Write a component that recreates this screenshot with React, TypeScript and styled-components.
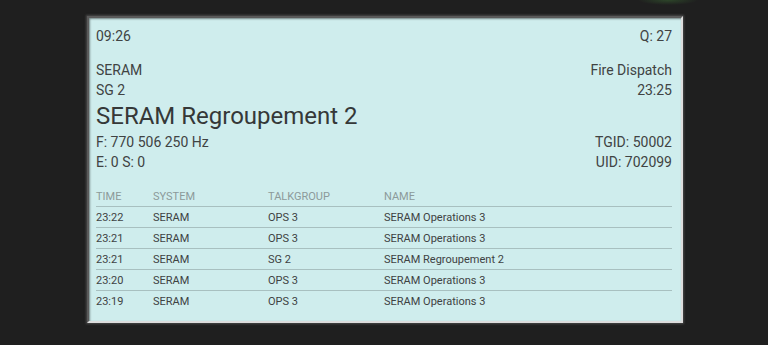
import React from 'react';
import styled, { createGlobalStyle } from 'styled-components';

const GlobalStyle = createGlobalStyle`
  html, body {
    margin: 0;
    padding: 0;
    height: 100%;
  }
  body {
    background:
      radial-gradient(ellipse 30px 5px at 668px 0, rgba(70, 140, 60, 0.35), rgba(70, 140, 60, 0) 100%),
      #1f1f1f;
    font-family: Roboto, "Liberation Sans", sans-serif;
  }
`;

const Page = styled.div`
  padding: 16px 0 0 87px;
`;

const Panel = styled.div`
  box-sizing: border-box;
  width: 596px;
  height: 307px;
  background: #cfeded;
  border: 2px solid;
  border-color: #5a5a5a #dcdcdc #dcdcdc #5a5a5a;
  box-shadow: 0 0 2px 1px #4a4a4a, inset 1px 1px 2px rgba(0, 0, 0, 0.45);
  padding: 8px 9px 0 7px;
  color: #404343;
`;

const InfoRow = styled.div<{ $gap?: number }>`
  display: flex;
  justify-content: space-between;
  align-items: center;
  margin-top: ${({ $gap }) => $gap ?? 0}px;
  height: 20px;
  font-size: 14px;
`;

const Title = styled.div`
  font-size: 24px;
  line-height: 32px;
  height: 32px;
  color: #353838;
`;

const Table = styled.table`
  width: 100%;
  margin-top: 14px;
  border-collapse: collapse;
  font-size: 11px;
`;

const HeadCell = styled.th<{ $w?: number }>`
  width: ${({ $w }) => ($w ? `${$w}px` : 'auto')};
  text-align: left;
  font-weight: 400;
  color: #8c9a9a;
  height: 20px;
  padding: 0;
  border-bottom: 1px solid #a8c0c0;
`;

const Row = styled.tr<{ $last?: boolean }>`
  border-bottom: ${({ $last }) => ($last ? 'none' : '1px solid #a8c0c0')};
`;

const Cell = styled.td`
  box-sizing: border-box;
  height: 20px;
  line-height: 19px;
  padding: 1px 0 0;
  color: #3e4242;
`;

const calls = [
  { time: '23:22', system: 'SERAM', tg: 'OPS 3', name: 'SERAM Operations 3' },
  { time: '23:21', system: 'SERAM', tg: 'OPS 3', name: 'SERAM Operations 3' },
  { time: '23:21', system: 'SERAM', tg: 'SG 2', name: 'SERAM Regroupement 2' },
  { time: '23:20', system: 'SERAM', tg: 'OPS 3', name: 'SERAM Operations 3' },
  { time: '23:19', system: 'SERAM', tg: 'OPS 3', name: 'SERAM Operations 3' },
];

const App: React.FC = () => {
  return (
    <Page>
      <GlobalStyle />
      <Panel>
        <InfoRow>
          <span>09:26</span>
          <span>Q: 27</span>
        </InfoRow>
        <InfoRow $gap={14}>
          <span>SERAM</span>
          <span>Fire Dispatch</span>
        </InfoRow>
        <InfoRow>
          <span>SG 2</span>
          <span>23:25</span>
        </InfoRow>
        <Title>SERAM Regroupement 2</Title>
        <InfoRow>
          <span>F: 770 506 250 Hz</span>
          <span>TGID: 50002</span>
        </InfoRow>
        <InfoRow>
          <span>E: 0 S: 0</span>
          <span>UID: 702099</span>
        </InfoRow>
        <Table>
          <thead>
            <tr>
              <HeadCell $w={57}>TIME</HeadCell>
              <HeadCell $w={115}>SYSTEM</HeadCell>
              <HeadCell $w={116}>TALKGROUP</HeadCell>
              <HeadCell>NAME</HeadCell>
            </tr>
          </thead>
          <tbody>
            {calls.map((c, i) => (
              <Row key={i} $last={i === calls.length - 1}>
                <Cell>{c.time}</Cell>
                <Cell>{c.system}</Cell>
                <Cell>{c.tg}</Cell>
                <Cell>{c.name}</Cell>
              </Row>
            ))}
          </tbody>
        </Table>
      </Panel>
    </Page>
  );
};

export default App;
